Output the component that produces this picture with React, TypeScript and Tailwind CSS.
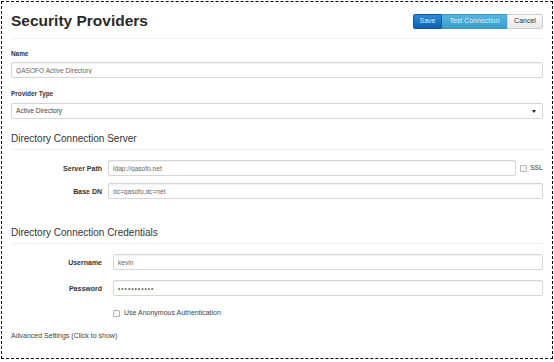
import React from 'react';

const font = { fontFamily: '"Liberation Sans", Arial, sans-serif' };

function TextInput({ value, type = 'text', className = '' }: { value: string; type?: string; className?: string }) {
    return (
        <input
            type={type}
            readOnly
            defaultValue={value}
            className={`block h-[16px] w-full min-w-0 rounded-[2px] border border-[#d6d6d6] bg-white px-[4px] text-[6.6px] text-[#666] shadow-[inset_0_1px_1px_rgba(0,0,0,0.06)] outline-none ${className}`}
            style={font}
        />
    );
}

function Checkbox() {
    return <span className="block h-[7px] w-[7px] shrink-0 rounded-[1px] border border-[#b5b5b5] bg-[#f7f7f7]" />;
}

function SideRow({ label, gap, children }: { label: string; gap: string; children: React.ReactNode }) {
    return (
        <div className="flex h-[16px] items-center">
            <label className={`w-[91px] shrink-0 text-right text-[7px] font-bold leading-none text-[#333] ${gap}`}>{label}</label>
            <div className="flex flex-1 items-center">{children}</div>
        </div>
    );
}

export default function App() {
    return (
        <div className="h-[362px] w-[554px] bg-white pl-[1px] pt-[1px]" style={font}>
            <div className="h-[358px] w-[552px] border border-dashed border-black px-[9px]">
                {/* Header */}
                <div className="flex h-[37px] items-center justify-between border-b border-[#f0f0f0] pt-[2px]">
                    <h1 className="text-[15.5px] font-bold leading-none text-[#2a2a2a]">Security Providers</h1>
                    <div className="flex h-[15px] text-[7px]">
                        <button className="w-[29px] rounded-l-[2px] border border-[#0b58a3] bg-gradient-to-b from-[#2b89d9] to-[#0d60b2] text-[#dcecfb]">
                            Save
                        </button>
                        <button className="w-[65px] border-y border-[#3497c2] bg-gradient-to-b from-[#55b5dc] to-[#3a9fca] text-[#d8eef8]">
                            Test Connection
                        </button>
                        <button className="w-[36px] rounded-r-[2px] border border-[#cfcfcf] bg-gradient-to-b from-[#fafafa] to-[#e9e9e9] text-[#333]">
                            Cancel
                        </button>
                    </div>
                </div>

                {/* General */}
                <div className="mt-[11px] h-[8px] text-[6.4px] font-bold leading-[8px] text-[#333]">Name</div>
                <div className="mt-[4px]">
                    <TextInput value="QASOFO Active Directory" />
                </div>
                <div className="mt-[12px] h-[8px] text-[6.4px] font-bold leading-[8px] text-[#333]">Provider Type</div>
                <div className="relative mt-[5px] flex h-[16px] items-center rounded-[2px] border border-[#d6d6d6] bg-white px-[4px] text-[6.6px] text-[#444]">
                    Active Directory
                    <span className="absolute right-[6px] top-[6px] h-0 w-0 border-x-[2px] border-t-[3px] border-x-transparent border-t-[#222]" />
                </div>

                {/* Directory Connection Server */}
                <h2 className="mt-[14px] border-b border-[#f0f0f0] pb-[4px] text-[10px] leading-[12px] text-[#333]">
                    Directory Connection Server
                </h2>
                <div className="mt-[10px]">
                    <SideRow label="Server Path" gap="mr-[6px]">
                        <TextInput value="ldap://qasofo.net" />
                        <span className="ml-[4px]">
                            <Checkbox />
                        </span>
                        <span className="ml-[3px] text-[6.6px] font-bold text-[#777]">SSL</span>
                    </SideRow>
                </div>
                <div className="mt-[7px]">
                    <SideRow label="Base DN" gap="mr-[6px]">
                        <TextInput value="dc=qasofo,dc=net" />
                    </SideRow>
                </div>

                {/* Directory Connection Credentials */}
                <h2 className="mt-[28px] border-b border-[#f0f0f0] pb-[4px] text-[10px] leading-[12px] text-[#333]">
                    Directory Connection Credentials
                </h2>
                <div className="mt-[10px]">
                    <SideRow label="Username" gap="mr-[11px]">
                        <TextInput value="kevin" />
                    </SideRow>
                </div>
                <div className="mt-[10px]">
                    <SideRow label="Password" gap="mr-[11px]">
                        <TextInput value="kevinpasswd" type="password" className="tracking-[1px] text-[#111]" />
                    </SideRow>
                </div>
                <div className="mt-[12px] flex h-[10px] items-center pl-[102px]">
                    <Checkbox />
                    <span className="ml-[4px] text-[7px] text-[#444]">Use Anonymous Authentication</span>
                </div>
                <div className="mt-[13px] text-[7px] leading-[10px] text-[#444]">Advanced Settings (Click to show)</div>
            </div>
        </div>
    );
}
